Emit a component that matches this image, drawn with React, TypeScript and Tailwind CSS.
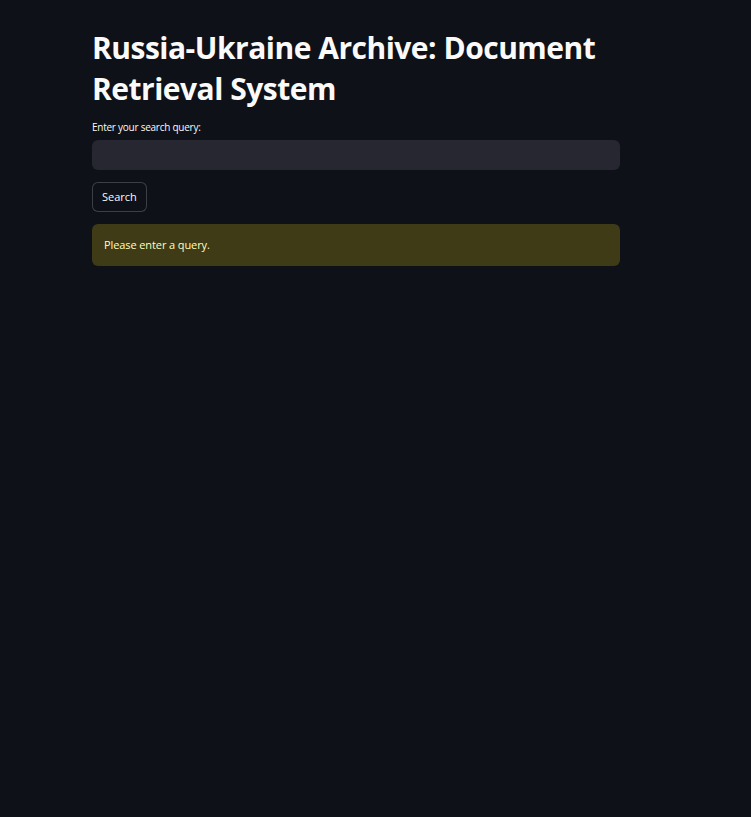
export default function App() {
  return (
    <div className="min-h-[817px] w-full bg-[#0e1117] font-['Open_Sans',sans-serif] text-[#fafafa]">
      <div className="ml-[92px] w-[528px] pt-[27px]">
        <h1 className="text-[30px] font-bold leading-[41px] tracking-[-0.5px] text-[#fafafa]">
          Russia-Ukraine Archive: Document Retrieval System
        </h1>

        <label className="mt-[11px] block text-[10px] leading-[14px] tracking-[-0.25px]">Enter your search query:</label>
        <input
          type="text"
          className="mt-[6px] block h-[30px] w-full rounded-[6px] bg-[#262730] px-3 text-[12px] outline-none"
        />

        <button className="mt-[12px] flex h-[30px] items-center rounded-[6px] border border-[#fafafa33] bg-[#0e1117] px-[9px] text-[11px] text-[#fafafa]">
          Search
        </button>

        <div className="mt-[12px] flex h-[42px] items-center rounded-[6px] bg-[#3e3b16] px-[12px] text-[11px] tracking-[-0.1px] text-[#ffffc2]">
          Please enter a query.
        </div>
      </div>
    </div>
  );
}
